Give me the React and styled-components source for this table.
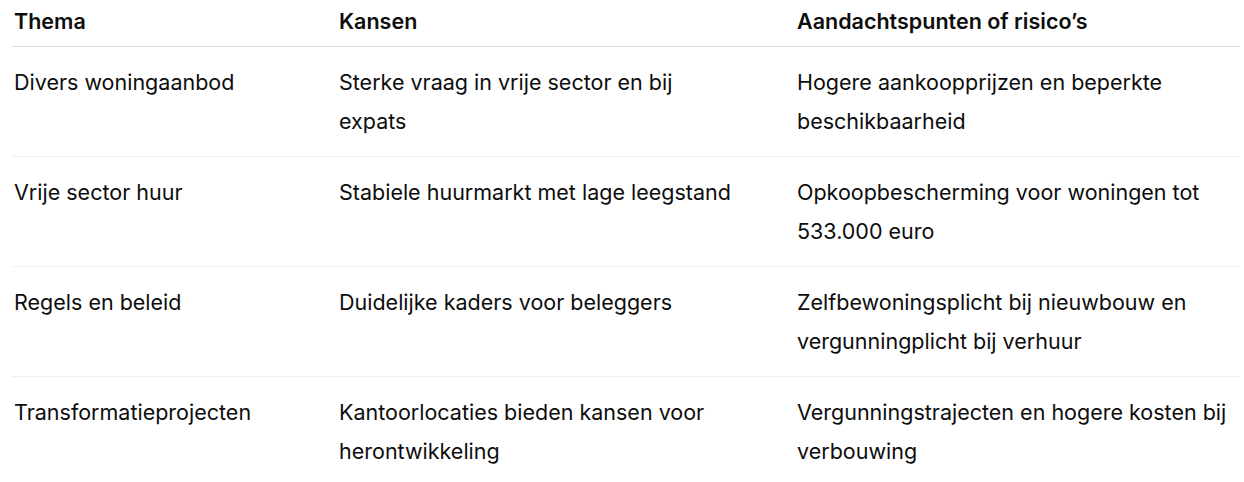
import styled, { createGlobalStyle } from "styled-components";

const GlobalStyle = createGlobalStyle`
  html, body {
    margin: 0;
    padding: 0;
    background: #ffffff;
  }
  body {
    font-family: Inter, "Noto Sans", sans-serif;
    color: #0d0d0d;
    -webkit-font-smoothing: antialiased;
  }
`;

const Wrapper = styled.div`
  padding: 0 4px 0 12px;
`;

const Table = styled.table`
  width: 100%;
  border-collapse: collapse;
  table-layout: fixed;
  font-size: 21.5px;
  line-height: 39px;
`;

const Col = styled.col`
  width: ${(p) => p.$width};
`;

const HeadCell = styled.th`
  text-align: left;
  font-weight: 600;
  vertical-align: top;
  padding: 2px 58px 5px 0;
  border-bottom: 1px solid #dcdcdc;

  &:first-child {
    padding-left: 2px;
  }
  &:last-child {
    padding-right: 4px;
  }
`;

const Row = styled.tr`
  border-bottom: 1px solid ${(p) => (p.$last ? "transparent" : "#f0f0f0")};
`;

const Cell = styled.td`
  vertical-align: top;
  padding: 16px 58px 15px 0;
  font-weight: 400;

  &:first-child {
    padding-left: 2px;
  }
  &:last-child {
    padding-right: 4px;
  }
`;

const rows = [
  [
    "Divers woningaanbod",
    "Sterke vraag in vrije sector en bij expats",
    "Hogere aankoopprijzen en beperkte beschikbaarheid",
  ],
  [
    "Vrije sector huur",
    "Stabiele huurmarkt met lage leegstand",
    "Opkoopbescherming voor woningen tot 533.000 euro",
  ],
  [
    "Regels en beleid",
    "Duidelijke kaders voor beleggers",
    "Zelfbewoningsplicht bij nieuwbouw en vergunningplicht bij verhuur",
  ],
  [
    "Transformatieprojecten",
    "Kantoorlocaties bieden kansen voor herontwikkeling",
    "Vergunningstrajecten en hogere kosten bij verbouwing",
  ],
];

export default function App() {
  return (
    <Wrapper>
      <GlobalStyle />
      <Table>
        <colgroup>
          <Col $width="327px" />
          <Col $width="458px" />
          <Col $width="auto" />
        </colgroup>
        <thead>
          <tr>
            <HeadCell>Thema</HeadCell>
            <HeadCell>Kansen</HeadCell>
            <HeadCell>Aandachtspunten of risico’s</HeadCell>
          </tr>
        </thead>
        <tbody>
          {rows.map((r, i) => (
            <Row key={r[0]} $last={i === rows.length - 1}>
              <Cell>{r[0]}</Cell>
              <Cell>{r[1]}</Cell>
              <Cell>{r[2]}</Cell>
            </Row>
          ))}
        </tbody>
      </Table>
    </Wrapper>
  );
}
